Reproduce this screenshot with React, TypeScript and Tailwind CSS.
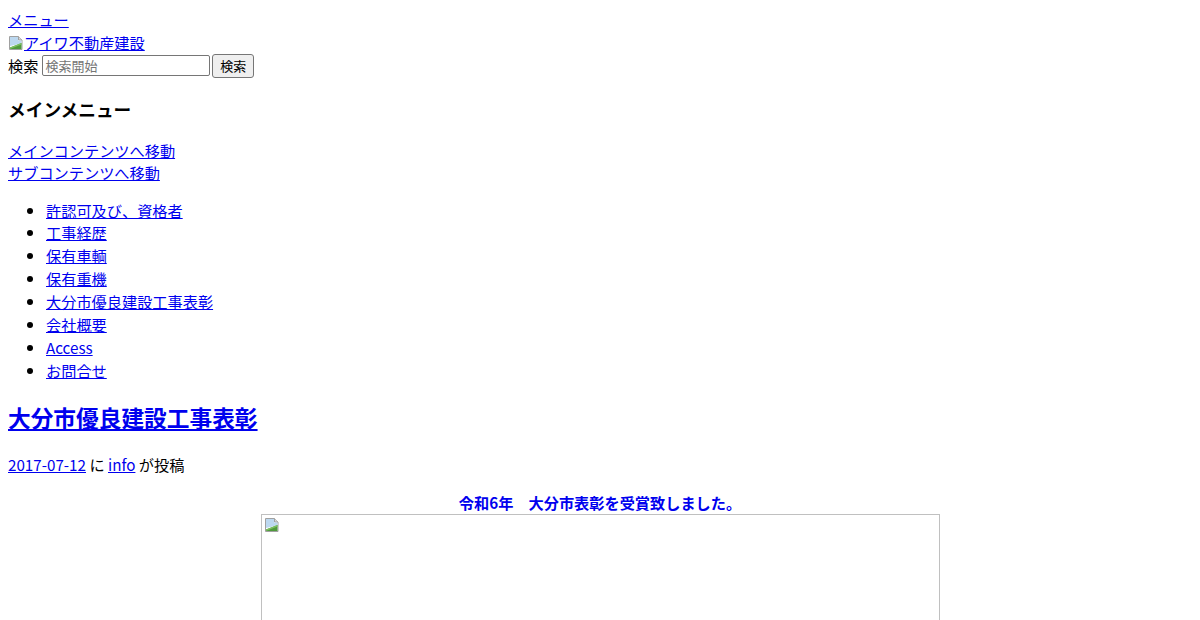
import React from "react";

const BrokenImg = () => (
  <svg width="16" height="16" viewBox="0 0 16 16" className="inline-block align-[-2px]">
    <path d="M1.5 1.5h9l3.5 3.5v9.5h-12.5z" fill="#ffffff" stroke="#a0a0a0" strokeWidth="1" />
    <path d="M10.5 1.5v3.5h3.5" fill="#d8d8d8" stroke="#a0a0a0" strokeWidth="1" />
    <path d="M2 2h8v3.5h3.5v3L2 11z" fill="#bcd8f0" />
    <path d="M2 14V12.5l11.5-4.5v6z" fill="#4f9a3c" />
    <path d="M2 12.5l11.5-4.5v1.5L2 14z" fill="#7cc060" />
  </svg>
);

export default function App() {
  const linkCls = "text-[#0000ee] underline";
  const items = ["許認可及び、資格者", "工事経歴", "保有車輌", "保有重機", "大分市優良建設工事表彰", "会社概要", "Access", "お問合せ"];
  return (
    <div
      className="p-2 text-black bg-white text-[15.2px] leading-[22.5px] min-h-[620px]"
      style={{ fontFamily: '"Noto Sans CJK JP", "Noto Sans", sans-serif' }}
    >
      <div className="h-[22.5px]">
        <a href="#" className={linkCls}>メニュー</a>
      </div>
      <div className="h-[22.5px]">
        <a href="#" className={linkCls}>
          <BrokenImg />
          アイワ不動産建設
        </a>
      </div>
      <form className="flex items-center h-[24px] mt-[0.5px]" onSubmit={(e) => e.preventDefault()}>
        <span>検索</span>
        <input
          type="text"
          placeholder="検索開始"
          className="ml-[4px] w-[168px] h-[21px] border border-[#767676] rounded-[2px] px-[2px] text-[13px] leading-none placeholder:text-[#757575]"
        />
        <button
          type="button"
          className="ml-[2px] h-[24px] w-[42px] text-[13px] bg-[#efefef] border border-[#767676] rounded-[3px] leading-none"
        >
          検索
        </button>
      </form>
      <h3 className="text-[17.7px] font-bold leading-[26px] mt-[18px]">メインメニュー</h3>
      <div className="mt-[17px]">
        <a href="#" className={linkCls}>メインコンテンツへ移動</a>
      </div>
      <div>
        <a href="#" className={linkCls}>サブコンテンツへ移動</a>
      </div>
      <ul className="list-disc pl-[38px] mt-[15px]">
        {items.map((t) => (
          <li key={t} className="leading-[22.86px]">
            <a href="#" className={linkCls}>{t}</a>
          </li>
        ))}
      </ul>
      <h2 className="text-[22.7px] font-bold leading-[34px] mt-[20px]">
        <a href="#" className={linkCls}>大分市優良建設工事表彰</a>
      </h2>
      <div className="mt-[18px]">
        <a href="#" className={linkCls}>2017-07-12</a> に <a href="#" className={linkCls}>info</a> が投稿
      </div>
      <div className="text-center mt-[15.5px]">
        <div className="font-bold text-[#0000ee]">令和6年　大分市表彰を受賞致しました。</div>
        <div className="mx-auto w-[679px] h-[400px] border border-[#c0c0c0] pl-[2px] pt-[2px] text-left leading-none">
          <BrokenImg />
        </div>
      </div>
    </div>
  );
}
